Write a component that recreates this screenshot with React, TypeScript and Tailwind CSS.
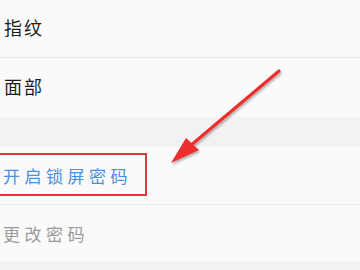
import React from "react";

const font = { fontFamily: '"Noto Sans CJK SC", "Noto Sans", sans-serif' };

export default function App() {
  return (
    <div className="relative w-[360px] h-[270px] overflow-hidden bg-[#f2f2f2]" style={font}>
      <div className="flex flex-col">
        <div className="h-[58px] flex items-center pl-[4px] pb-[2px] bg-[#fafafa] border-b border-[#e9e9e9] text-[18px] tracking-[2px] text-[#1e1e1e]">
          指纹
        </div>
        <div className="h-[59px] flex items-center pl-[4px] pb-[2px] bg-[#fafafa] text-[18px] tracking-[2px] text-[#1e1e1e]">
          面部
        </div>
        <div className="h-[30px] bg-[#f2f2f2]" />
        <div className="relative h-[58px] flex items-center pl-[3px] bg-[#fafafa] border-b border-[#e9e9e9] text-[17px] tracking-[4.5px] text-[#4a90e2]">
          开启锁屏密码
          <div className="absolute left-[-3px] top-[6px] w-[150px] h-[43px] border-2 border-[#e0393c]" />
        </div>
        <div className="h-[57px] flex items-center pl-[3px] bg-[#fafafa] text-[17px] tracking-[4.5px] text-[#9a9a9a]">
          更改密码
        </div>
      </div>
      <svg className="absolute left-0 top-0" width="360" height="270" viewBox="0 0 360 270">
        <defs>
          <filter id="sh" x="-20%" y="-20%" width="140%" height="140%">
            <feDropShadow dx="1" dy="2" stdDeviation="1.2" floodColor="#000" floodOpacity="0.3" />
          </filter>
        </defs>
        <g filter="url(#sh)">
          <line x1="279" y1="71" x2="190" y2="146" stroke="#ec2e2e" strokeWidth="3.2" strokeLinecap="round" />
          <polygon points="171,163 186,138 199,150" fill="#ec2e2e" />
        </g>
      </svg>
    </div>
  );
}
